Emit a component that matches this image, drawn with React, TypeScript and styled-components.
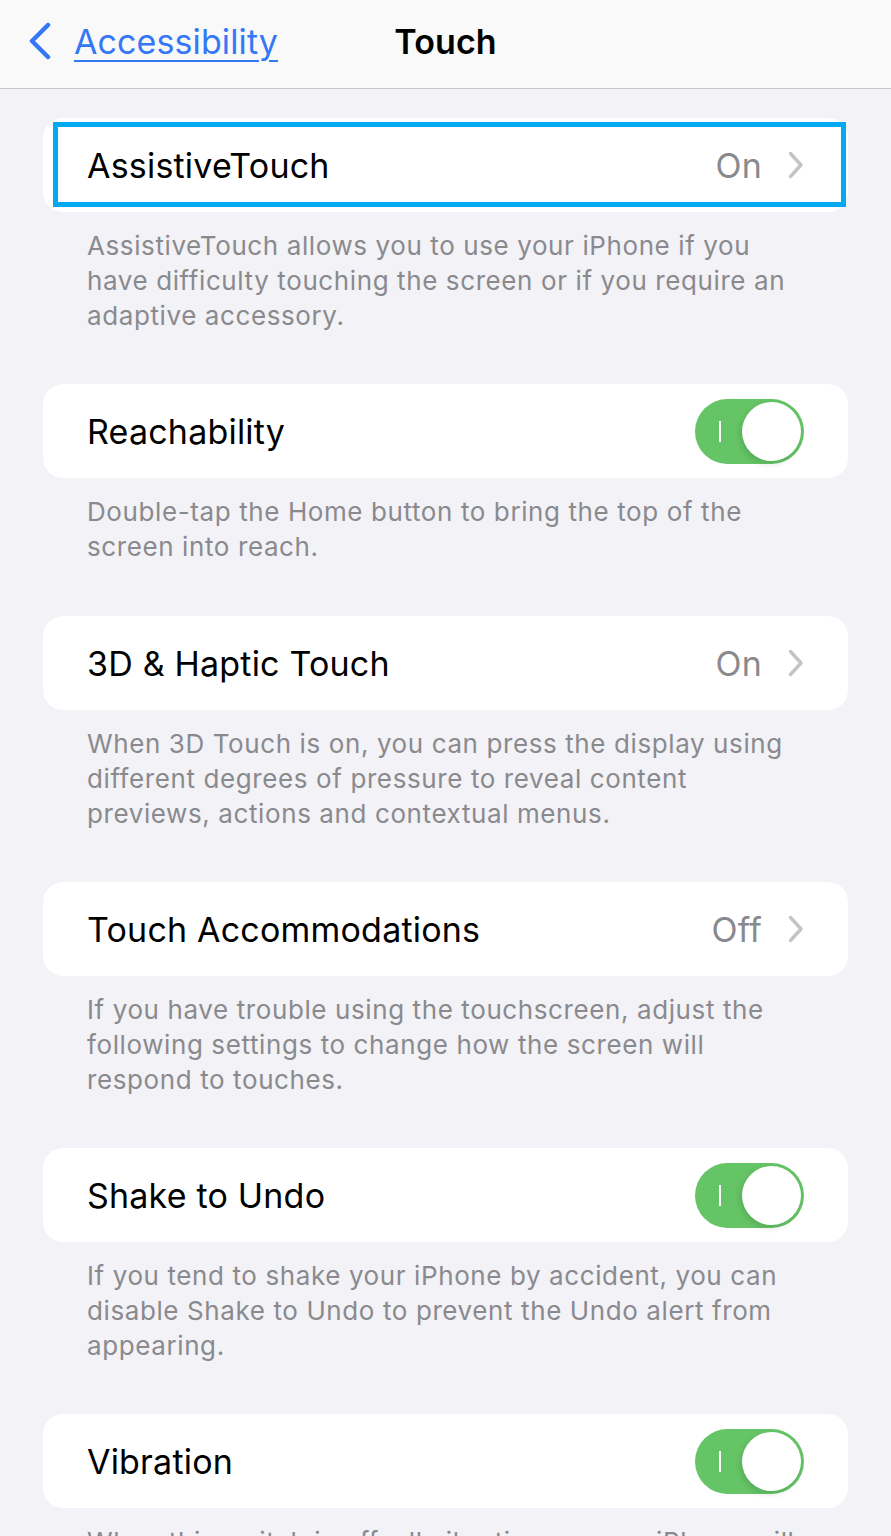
import React from "react";
import styled, { createGlobalStyle } from "styled-components";

const GlobalStyle = createGlobalStyle`
  html, body {
    margin: 0;
    padding: 0;
    background: #f2f2f7;
    font-family: Inter, "Open Sans", "Liberation Sans", sans-serif;
  }
`;

const Page = styled.div`
  width: 891px;
  min-height: 1536px;
  background: #f2f2f7;
`;

const NavBar = styled.header`
  box-sizing: border-box;
  height: 89px;
  padding-bottom: 6px;
  background: #f9f9f9;
  border-bottom: 1.5px solid #c8c8cc;
  display: grid;
  grid-template-columns: 1fr auto 1fr;
  align-items: center;
`;

const BackLink = styled.a`
  display: flex;
  align-items: center;
  gap: 22px;
  padding-left: 28px;
  color: #3478f6;
  font-size: 34px;
  letter-spacing: 0.1px;
  text-decoration: underline;
  text-decoration-thickness: 2px;
  text-underline-offset: 6px;
  cursor: pointer;
  svg {
    flex-shrink: 0;
  }
`;

const Title = styled.h1`
  margin: 0;
  font-size: 34px;
  font-weight: 600;
  color: #000;
  letter-spacing: 0.1px;
`;

const Content = styled.main`
  padding: 29px 43px 0;
`;

const Group = styled.section`
  display: flex;
  flex-direction: column;
`;

const Card = styled.div`
  position: relative;
  height: 94px;
  background: #fff;
  border-radius: 20px;
  display: flex;
  align-items: center;
  padding: 0 44px;
`;

const Highlight = styled.div`
  position: absolute;
  left: 10px;
  right: 2px;
  top: 4px;
  bottom: 5px;
  border: 5px solid #03a9f1;
  pointer-events: none;
`;

const Label = styled.span`
  flex: 1;
  font-size: 34px;
  color: #000;
  letter-spacing: 0.2px;
`;

const Value = styled.span`
  font-size: 34px;
  color: #8a8a8e;
  letter-spacing: 0.2px;
  margin-right: 26px;
`;

const Footer = styled.p<{ $gap: number }>`
  margin: 16px 0 ${(p) => p.$gap}px;
  padding: 0 44px;
  font-size: 26px;
  line-height: 35px;
  color: #8a8a8e;
  letter-spacing: 0.6px;
  white-space: nowrap;
`;

const Track = styled.div`
  position: relative;
  width: 109px;
  height: 65px;
  border-radius: 33px;
  background: #65c466;
  flex-shrink: 0;
`;

const OnMark = styled.span`
  position: absolute;
  left: 24px;
  top: 22px;
  width: 2px;
  height: 21px;
  background: #fff;
`;

const Knob = styled.span`
  position: absolute;
  right: 3px;
  top: 3px;
  width: 59px;
  height: 59px;
  border-radius: 50%;
  background: #fff;
  box-shadow: -2px 3px 6px rgba(0, 0, 0, 0.12);
`;

const Chevron = () => (
  <svg width="16" height="28" viewBox="0 0 16 28" fill="none">
    <path
      d="M2.5 2.5 L13 14 L2.5 25.5"
      stroke="#c4c4c7"
      strokeWidth="3.4"
      strokeLinecap="round"
      strokeLinejoin="round"
    />
  </svg>
);

const BackChevron = () => (
  <svg width="24" height="38" viewBox="0 0 24 38" fill="none">
    <path
      d="M20 3 L4 19 L20 35"
      stroke="#3478f6"
      strokeWidth="4.5"
      strokeLinecap="round"
      strokeLinejoin="round"
    />
  </svg>
);

const Switch = () => (
  <Track>
    <OnMark />
    <Knob />
  </Track>
);

type Row = {
  label: string;
  value?: string;
  toggle?: boolean;
  highlight?: boolean;
  footer: string[];
  gap: number;
};

const rows: Row[] = [
  {
    label: "AssistiveTouch",
    value: "On",
    highlight: true,
    footer: [
      "AssistiveTouch allows you to use your iPhone if you",
      "have difficulty touching the screen or if you require an",
      "adaptive accessory.",
    ],
    gap: 51,
  },
  {
    label: "Reachability",
    toggle: true,
    footer: [
      "Double-tap the Home button to bring the top of the",
      "screen into reach.",
    ],
    gap: 52,
  },
  {
    label: "3D & Haptic Touch",
    value: "On",
    footer: [
      "When 3D Touch is on, you can press the display using",
      "different degrees of pressure to reveal content",
      "previews, actions and contextual menus.",
    ],
    gap: 51,
  },
  {
    label: "Touch Accommodations",
    value: "Off",
    footer: [
      "If you have trouble using the touchscreen, adjust the",
      "following settings to change how the screen will",
      "respond to touches.",
    ],
    gap: 51,
  },
  {
    label: "Shake to Undo",
    toggle: true,
    footer: [
      "If you tend to shake your iPhone by accident, you can",
      "disable Shake to Undo to prevent the Undo alert from",
      "appearing.",
    ],
    gap: 51,
  },
  {
    label: "Vibration",
    toggle: true,
    footer: [
      "When this switch is off, all vibration on your iPhone will",
      "be disabled, including those for earthquake, tsunami and",
      "other emergency alerts.",
    ],
    gap: 51,
  },
];

export default function App() {
  return (
    <Page>
      <GlobalStyle />
      <NavBar>
        <BackLink>
          <BackChevron />
          Accessibility
        </BackLink>
        <Title>Touch</Title>
        <div />
      </NavBar>
      <Content>
        {rows.map((r) => (
          <Group key={r.label}>
            <Card>
              {r.highlight && <Highlight />}
              <Label>{r.label}</Label>
              {r.value && <Value>{r.value}</Value>}
              {r.value && <Chevron />}
              {r.toggle && <Switch />}
            </Card>
            <Footer $gap={r.gap}>
              {r.footer.map((line, i) => (
                <React.Fragment key={i}>
                  {line}
                  {i < r.footer.length - 1 && <br />}
                </React.Fragment>
              ))}
            </Footer>
          </Group>
        ))}
      </Content>
    </Page>
  );
}
